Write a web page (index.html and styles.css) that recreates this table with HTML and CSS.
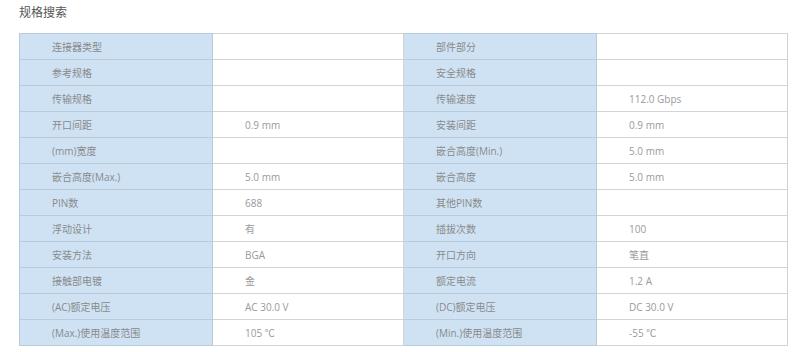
FILE: index.html
```html
<!DOCTYPE html>
<html lang="zh-CN">
<head>
    <meta charset="UTF-8">
    <meta name="viewport" content="width=device-width, initial-scale=1.0">
    <title>规格搜索</title>
    <link rel="stylesheet" href="styles.css">
</head>
<body>
    <div class="page">
        <h2 class="title">规格搜索</h2>

        <table class="spec-table">
            <colgroup>
                <col class="col-label">
                <col class="col-value">
                <col class="col-label">
                <col class="col-value">
            </colgroup>
            <tr>
                <th>连接器类型</th><td></td>
                <th>部件部分</th><td></td>
            </tr>
            <tr>
                <th>参考规格</th><td></td>
                <th>安全规格</th><td></td>
            </tr>
            <tr>
                <th>传输规格</th><td></td>
                <th>传输速度</th><td>112.0 Gbps</td>
            </tr>
            <tr>
                <th>开口间距</th><td>0.9 mm</td>
                <th>安装间距</th><td>0.9 mm</td>
            </tr>
            <tr>
                <th>(mm)宽度</th><td></td>
                <th>嵌合高度(Min.)</th><td>5.0 mm</td>
            </tr>
            <tr>
                <th>嵌合高度(Max.)</th><td>5.0 mm</td>
                <th>嵌合高度</th><td>5.0 mm</td>
            </tr>
            <tr>
                <th>PIN数</th><td>688</td>
                <th>其他PIN数</th><td></td>
            </tr>
            <tr>
                <th>浮动设计</th><td>有</td>
                <th>插拔次数</th><td>100</td>
            </tr>
            <tr>
                <th>安装方法</th><td>BGA</td>
                <th>开口方向</th><td>笔直</td>
            </tr>
            <tr>
                <th>接触部电镀</th><td>金</td>
                <th>额定电流</th><td>1.2 A</td>
            </tr>
            <tr>
                <th>(AC)额定电压</th><td>AC 30.0 V</td>
                <th>(DC)额定电压</th><td>DC 30.0 V</td>
            </tr>
            <tr>
                <th>(Max.)使用温度范围</th><td>105 ℃</td>
                <th>(Min.)使用温度范围</th><td>-55 ℃</td>
            </tr>
        </table>
    </div>
</body>
</html>
```

FILE: styles.css
```css
body {
    margin: 0;
    background: #fff;
    font-family: "Open Sans", "Noto Sans CJK SC", sans-serif;
}
.page {
    padding: 6px 13px 0 19px;
}
.title {
    margin: 0 0 13px 0;
    font-size: 12px;
    line-height: 14px;
    font-weight: normal;
    color: #555;
}
.spec-table {
    width: 768px;
    border-collapse: collapse;
    table-layout: fixed;
    border: 1px solid #c9c9c9;
}
.col-label {
    width: 193px;
}
.col-value {
    width: 191px;
}
.spec-table th,
.spec-table td {
    height: 25px;
    padding: 0 0 0 32px;
    font-size: 10px;
    font-weight: normal;
    text-align: left;
    white-space: nowrap;
    border: 1px solid #d3d3d3;
}
.spec-table th {
    background: #cfe2f4;
    color: #8a8a8a;
    border-color: #b9cadb;
}
.spec-table td {
    color: #9a9a9a;
}
```
